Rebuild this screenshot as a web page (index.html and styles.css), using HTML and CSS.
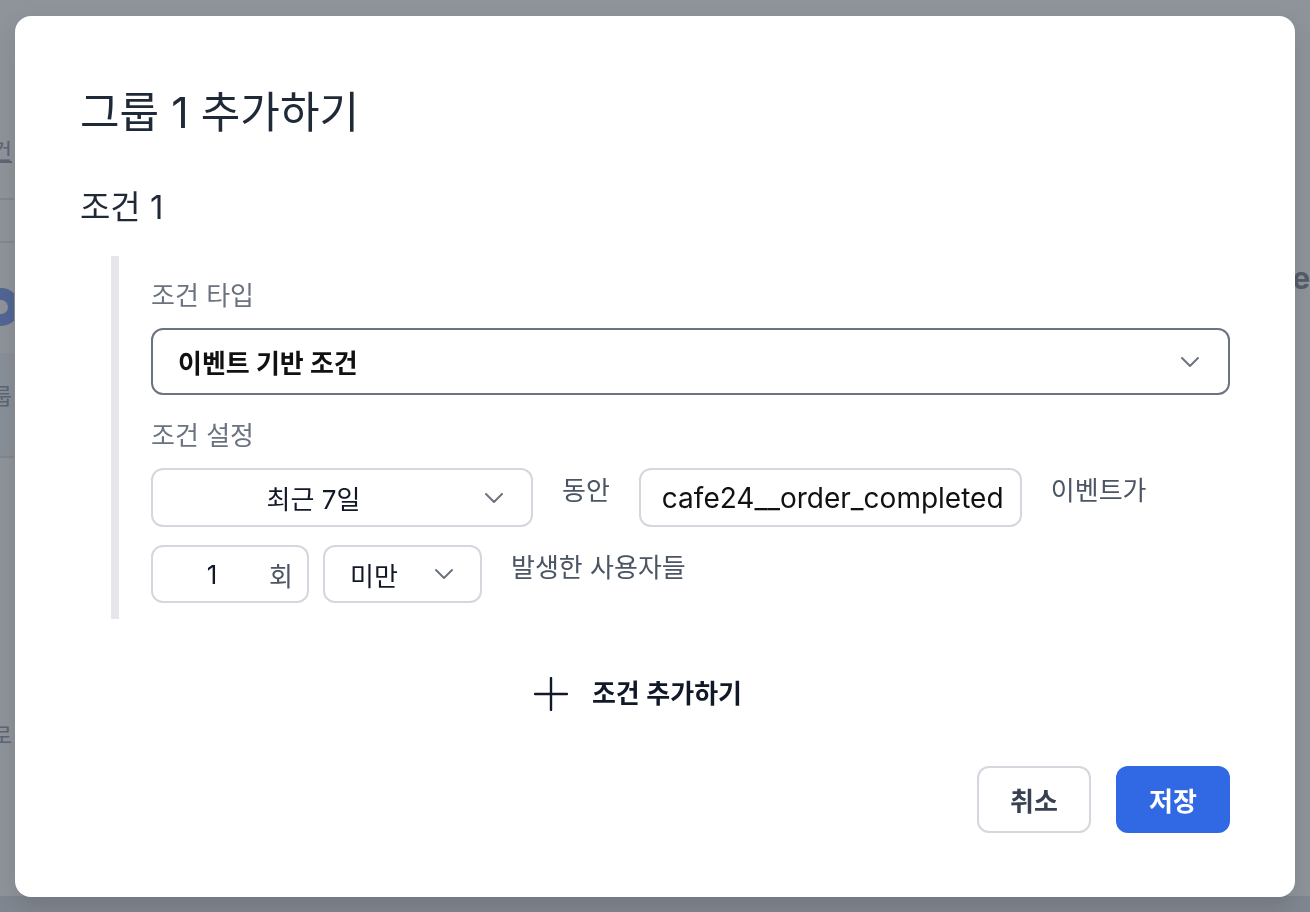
FILE: index.html
```html
<!DOCTYPE html>
<html lang="ko">
<head>
<meta charset="utf-8">
<title>그룹 1 추가하기</title>
<link rel="stylesheet" href="styles.css">
</head>
<body>
<div class="page">
  <div class="page-left">
    <div class="bg-row bg-row-a"><span class="bg-link">조건</span></div>
    <div class="bg-row bg-row-b"></div>
    <div class="bg-row bg-row-c"><span class="bg-dot"></span></div>
    <div class="bg-row bg-row-d"><span class="bg-text">그룹</span></div>
    <div class="bg-row bg-row-e"><span class="bg-text">필터로</span></div>
  </div>
  <div class="page-mid"></div>
  <div class="page-right">
    <div class="bg-head">Se</div>
  </div>
</div>

<div class="overlay">
  <div class="modal">
    <h1 class="modal-title">그룹 1 추가하기</h1>
    <h2 class="cond-title">조건 1</h2>

    <div class="cond-box">
      <div class="field-label">조건 타입</div>
      <div class="select select-main">
        <span class="select-value">이벤트 기반 조건</span>
        <svg class="chev" viewBox="0 0 20 12" width="20" height="12"><path d="M2 2 L10 10 L18 2" fill="none" stroke="currentColor" stroke-width="2" stroke-linecap="round" stroke-linejoin="round"/></svg>
      </div>

      <div class="field-label label-gap">조건 설정</div>
      <div class="cond-row">
        <div class="select select-period">
          <span class="select-value center">최근 7일</span>
          <svg class="chev" viewBox="0 0 20 12" width="20" height="12"><path d="M2 2 L10 10 L18 2" fill="none" stroke="currentColor" stroke-width="2" stroke-linecap="round" stroke-linejoin="round"/></svg>
        </div>
        <span class="row-text">동안</span>
        <div class="input input-event">cafe24__order_completed</div>
        <span class="row-text">이벤트가</span>
      </div>
      <div class="cond-row row-second">
        <div class="input input-count">
          <span class="count-num">1</span>
          <span class="count-unit">회</span>
        </div>
        <div class="select select-op">
          <span class="select-value">미만</span>
          <svg class="chev" viewBox="0 0 20 12" width="20" height="12"><path d="M2 2 L10 10 L18 2" fill="none" stroke="currentColor" stroke-width="2" stroke-linecap="round" stroke-linejoin="round"/></svg>
        </div>
        <span class="row-text">발생한 사용자들</span>
      </div>
    </div>

    <div class="add-row">
      <button class="add-btn" type="button">
        <svg class="plus" viewBox="0 0 34 34" width="34" height="34"><path d="M17 1 V33 M1 17 H33" fill="none" stroke="currentColor" stroke-width="2.4" stroke-linecap="round"/></svg>
        <span>조건 추가하기</span>
      </button>
    </div>

    <div class="actions">
      <button class="btn btn-cancel" type="button">취소</button>
      <button class="btn btn-save" type="button">저장</button>
    </div>
  </div>
</div>
</body>
</html>
```
FILE: styles.css
```css
* { box-sizing: border-box; }

html, body {
  margin: 0;
  padding: 0;
  width: 1310px;
  height: 912px;
  overflow: hidden;
}

body {
  font-family: Inter, "Noto Sans CJK KR", sans-serif;
  background: #ffffff;
  color: #111827;
}

/* underlying page (mostly hidden by the modal) */
.page {
  display: flex;
  width: 1310px;
  height: 912px;
  background: #ffffff;
  border-bottom: 16px solid #e2e4e8;
}

.page-left {
  width: 14px;
  flex: none;
  display: flex;
  flex-direction: column;
  padding-top: 116px;
  overflow: hidden;
}

.bg-row {
  display: flex;
  justify-content: flex-end;
  align-items: center;
  border-bottom: 2px solid #e5e7eb;
  color: #9ca3af;
  font-size: 22px;
  line-height: 30px;
  white-space: nowrap;
  padding-right: 2px;
}

.bg-row span { flex: none; }

.bg-row-a { height: 84px; align-items: flex-start; padding-top: 20px; }
.bg-row-a .bg-link { text-decoration: underline; }
.bg-row-b { height: 43px; }
.bg-row-c { height: 110px; border-bottom: none; align-items: flex-start; padding-top: 45px; }
.bg-row-d { height: 105px; background: #f5f6f8; align-items: flex-start; padding-top: 28px; }
.bg-row-e { height: 300px; border-bottom: none; align-items: flex-end; padding-bottom: 8px; }

.bg-dot {
  width: 38px;
  height: 38px;
  border-radius: 50%;
  border: 12px solid #86a2f2;
  margin-right: -8px;
}

.page-mid { flex: 1; }

.page-right {
  width: 18px;
  flex: none;
  overflow: hidden;
  padding-top: 260px;
  display: flex;
  justify-content: flex-end;
}

.bg-head {
  flex: none;
  font-size: 30px;
  font-weight: 700;
  color: #8a909b;
}

/* overlay + modal */
.overlay {
  position: fixed;
  inset: 0;
  background: rgba(31, 41, 55, 0.5);
  display: flex;
  align-items: flex-start;
  justify-content: center;
  padding-top: 16px;
}

.modal {
  width: 1280px;
  height: 881px;
  background: #ffffff;
  border-radius: 16px;
  padding: 72px 65px 64px 65px;
  display: flex;
  flex-direction: column;
  box-shadow: 0 10px 25px rgba(0, 0, 0, 0.12);
}

.modal-title {
  margin: 0;
  font-size: 43px;
  line-height: 48px;
  font-weight: 400;
  color: #1f2937;
}

.cond-title {
  margin: 51px 0 0 0;
  font-size: 33px;
  line-height: 40px;
  font-weight: 400;
  color: #1f2937;
}

.cond-box {
  margin: 29px 0 0 31px;
  border-left: 8px solid #e5e7eb;
  padding: 24px 0 16px 32px;
  display: flex;
  flex-direction: column;
}

.field-label {
  font-size: 26px;
  line-height: 32px;
  color: #6b7280;
}

.label-gap { margin-top: 25px; }

.select, .input {
  display: flex;
  align-items: center;
  background: #ffffff;
  border: 2px solid #d4d7dd;
  border-radius: 12px;
  font-size: 26px;
  color: #111827;
}

.select-main {
  margin-top: 16px;
  height: 67px;
  border-color: #6b7280;
  padding: 0 28px 0 25px;
}

.select-main .select-value {
  font-weight: 700;
  color: #111111;
}

.select-value { flex: 1; }
.select-value.center { text-align: center; padding-right: 30px; }

.chev {
  color: #6b7280;
  flex: none;
}

.cond-row {
  margin-top: 16px;
  display: flex;
  align-items: flex-start;
  gap: 14px;
}

.row-second { margin-top: 18px; }

.row-text {
  padding: 7px 15px 0 15px;
  font-size: 26px;
  line-height: 32px;
  color: #4b5563;
}

.select-period {
  width: 382px;
  height: 59px;
  padding: 0 27px 0 20px;
}

.input-event {
  width: 383px;
  height: 59px;
  padding: 0 0 0 21px;
  font-size: 28px;
  color: #111111;
}

.input-count {
  width: 158px;
  height: 58px;
  padding: 0 14px 0 20px;
}

.count-num { flex: 1; text-align: center; padding-right: 18px; }
.count-unit { color: #4b5563; }

.select-op {
  width: 159px;
  height: 58px;
  padding: 0 26px 0 25px;
}

.add-row {
  margin-top: 58px;
  height: 34px;
  display: flex;
  justify-content: center;
  padding-right: 34px;
}

.add-btn {
  display: flex;
  align-items: center;
  gap: 24px;
  height: 34px;
  border: none;
  background: none;
  padding: 0;
  font-family: inherit;
  font-size: 26px;
  line-height: 34px;
  font-weight: 600;
  color: #111827;
  cursor: pointer;
}

.plus { color: #111827; }

.actions {
  margin-top: 55px;
  display: flex;
  justify-content: flex-end;
  gap: 25px;
}

.btn {
  width: 114px;
  height: 67px;
  border-radius: 12px;
  font-family: inherit;
  font-size: 26px;
  font-weight: 700;
  cursor: pointer;
}

.btn-cancel {
  background: #ffffff;
  border: 2px solid #d4d7dd;
  color: #374151;
}

.btn-save {
  background: #3069e3;
  border: none;
  color: #ffffff;
}
```
